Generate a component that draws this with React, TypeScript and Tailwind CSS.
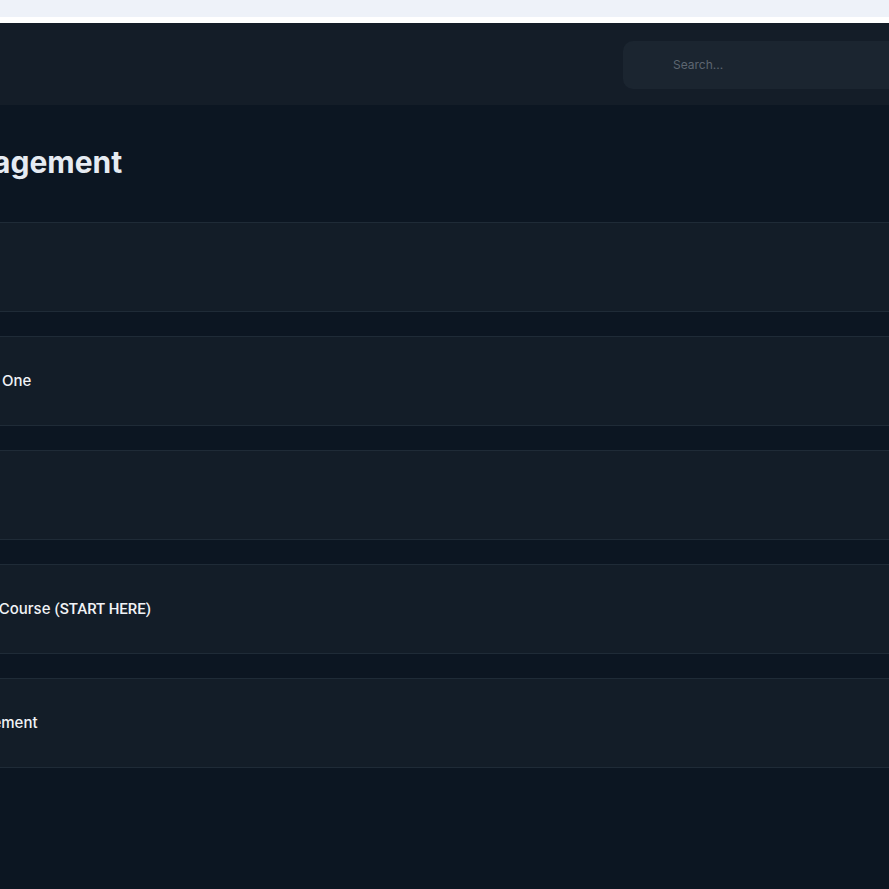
import React from 'react';

const lessons = [
  { title: 'Intro', tag: '' },
  { title: 'Milestone One', tag: '' },
  { title: 'Bonus', tag: '' },
  { title: 'Welcome Course', tag: '(START HERE)' },
  { title: 'Announcement', tag: '' },
];

export default function App() {
  return (
    <div className="min-h-screen w-full overflow-hidden bg-[#0c1622] font-['Inter',sans-serif]">
      <div className="h-[17px] bg-[#eef2f9]" />
      <div className="h-[6px] bg-white" />
      <div className="-ml-[214px] w-[1189px]">
        {/* top bar */}
        <header className="flex h-[82px] items-center justify-end bg-[#141d28] px-8 pt-[2px]">
          <div className="flex h-12 w-[320px] items-center rounded-[10px] bg-[#1b2530] pl-[50px]">
            <span className="text-[12px] text-[#5d6671]">Search...</span>
          </div>
        </header>

        <main className="px-8 pt-[39px]">
          <h1 className="mb-[42px] text-[30px] font-bold leading-[36px] text-[#e6ebf2]">
            Project Management
          </h1>

          <div className="flex flex-col gap-6">
            {lessons.map((lesson) => (
              <div
                key={lesson.title}
                className="flex h-[90px] items-center gap-[21px] rounded-lg border border-[#1f2b37] bg-[#131d28] px-6"
              >
                <div className="h-[60px] w-[64px] shrink-0 rounded-md bg-[#1a2531]" />
                <span className="text-[15px] font-medium text-[#f1f3f6]">
                  {lesson.title}
                  {lesson.tag && (
                    <span className="ml-1 font-['Roboto',sans-serif]">{lesson.tag}</span>
                  )}
                </span>
              </div>
            ))}
          </div>
        </main>
      </div>
    </div>
  );
}
